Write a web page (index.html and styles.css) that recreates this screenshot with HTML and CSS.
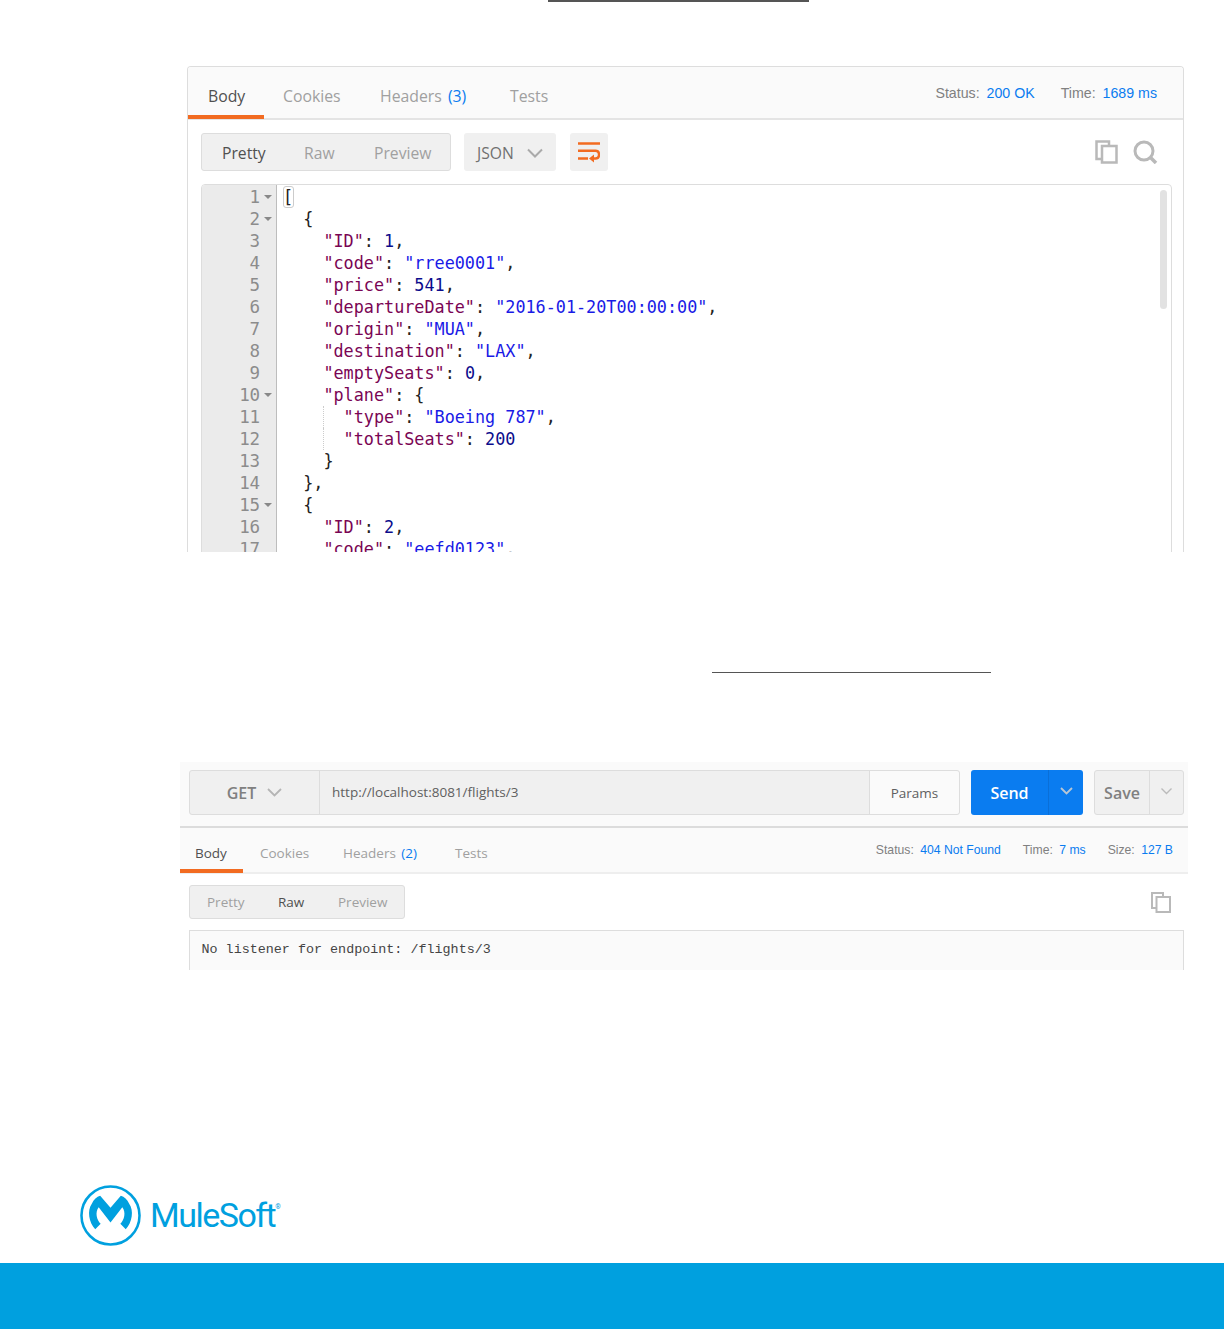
FILE: index.html
```html
<!DOCTYPE html>
<html lang="en">
<head>
<meta charset="utf-8">
<title>MuleSoft flights API</title>
<link rel="stylesheet" href="styles.css">
</head>
<body>
<div class="rule rule-top"></div>

<section class="card card-one">
  <div class="tabs tabs-lg">
    <span class="tab active">Body</span>
    <span class="tab">Cookies</span>
    <span class="tab">Headers <b>(3)</b></span>
    <span class="tab">Tests</span>
    <div class="meta">
      <span class="meta-item">Status: <b>200 OK</b></span>
      <span class="meta-item">Time: <b>1689 ms</b></span>
    </div>
  </div>
  <div class="toolbar">
    <div class="seg"><span class="on">Pretty</span><span>Raw</span><span>Preview</span></div>
    <div class="select"><span>JSON</span>
      <svg class="chev" width="16" height="10" viewBox="0 0 16 10"><path d="M1 1.500l7 7 7-7" fill="none" stroke="#aaa" stroke-width="2"/></svg>
    </div>
    <div class="wrap-btn">
      <svg width="22" height="21" viewBox="0 0 22 21"><path d="M0 1.500h22M0 16.500h10M0 8.800h17.500c2.300 0 3.500 1.600 3.500 3.800s-1.200 3.900-3.500 3.900H15" fill="none" stroke="#f26b21" stroke-width="2.400"/><path d="M16 12.500l-5 4 5 4z" fill="#f26b21"/></svg>
    </div>
    <div class="tools">
      <svg width="23" height="24" viewBox="0 0 23 24"><path d="M7 19H1.500V1.500H14V6" fill="none" stroke="#b9b9b9" stroke-width="2.500"/><rect x="7" y="6" width="14.500" height="16.500" fill="none" stroke="#b9b9b9" stroke-width="2.500"/></svg>
      <svg width="25" height="24" viewBox="0 0 25 24"><circle cx="11" cy="11" r="9" fill="none" stroke="#b9b9b9" stroke-width="3"/><path d="M17 17l6 6" stroke="#b9b9b9" stroke-width="3.500"/></svg>
    </div>
  </div>
  <div class="editor">
    <div class="gutter">
      <div class="ln">1<i></i></div><div class="ln">2<i></i></div><div class="ln">3</div><div class="ln">4</div><div class="ln">5</div><div class="ln">6</div><div class="ln">7</div><div class="ln">8</div><div class="ln">9</div><div class="ln">10<i></i></div><div class="ln">11</div><div class="ln">12</div><div class="ln">13</div><div class="ln">14</div><div class="ln">15<i></i></div><div class="ln">16</div><div class="ln">17</div>
    </div>
    <div class="code">
      <div class="line"><span class="cursor">[</span></div>
      <div class="line i1">{</div>
      <div class="line i2"><span class="k">"ID"</span>: <span class="n">1</span>,</div>
      <div class="line i2"><span class="k">"code"</span>: <span class="s">"rree0001"</span>,</div>
      <div class="line i2"><span class="k">"price"</span>: <span class="n">541</span>,</div>
      <div class="line i2"><span class="k">"departureDate"</span>: <span class="s">"2016-01-20T00:00:00"</span>,</div>
      <div class="line i2"><span class="k">"origin"</span>: <span class="s">"MUA"</span>,</div>
      <div class="line i2"><span class="k">"destination"</span>: <span class="s">"LAX"</span>,</div>
      <div class="line i2"><span class="k">"emptySeats"</span>: <span class="n">0</span>,</div>
      <div class="line i2"><span class="k">"plane"</span>: {</div>
      <div class="line i3"><span class="k">"type"</span>: <span class="s">"Boeing 787"</span>,</div>
      <div class="line i3"><span class="k">"totalSeats"</span>: <span class="n">200</span></div>
      <div class="line i2">}</div>
      <div class="line i1">},</div>
      <div class="line i1">{</div>
      <div class="line i2"><span class="k">"ID"</span>: <span class="n">2</span>,</div>
      <div class="line i2"><span class="k">"code"</span>: <span class="s">"eefd0123"</span>,</div>
    </div>
    <div class="scroll"></div>
  </div>
</section>

<div class="rule rule-mid"></div>

<section class="card-two">
  <div class="request">
    <div class="url-group">
      <div class="method"><span>GET</span>
        <svg width="15" height="9" viewBox="0 0 15 9"><path d="M1 1l6.500 6.500L14 1" fill="none" stroke="#b5b5b5" stroke-width="1.800"/></svg>
      </div>
      <div class="url">http://localhost:8081/flights/3</div>
      <div class="params">Params</div>
    </div>
    <div class="send">
      <span class="send-label">Send</span>
      <span class="send-more"><svg width="13" height="8" viewBox="0 0 13 8"><path d="M1 1l5.500 5.500L12 1" fill="none" stroke="#b8c6d4" stroke-width="1.800"/></svg></span>
    </div>
    <div class="save">
      <span class="save-label">Save</span>
      <span class="save-more"><svg width="11" height="7" viewBox="0 0 11 7"><path d="M.5.500l5 5 5-5" fill="none" stroke="#bbb" stroke-width="1.400"/></svg></span>
    </div>
  </div>
  <div class="tabs tabs-sm">
    <span class="tab active">Body</span>
    <span class="tab">Cookies</span>
    <span class="tab">Headers <b>(2)</b></span>
    <span class="tab">Tests</span>
    <div class="meta">
      <span class="meta-item">Status: <b>404 Not Found</b></span>
      <span class="meta-item">Time: <b>7 ms</b></span>
      <span class="meta-item">Size: <b>127 B</b></span>
    </div>
  </div>
  <div class="toolbar-sm">
    <div class="seg seg-sm"><span>Pretty</span><span class="on">Raw</span><span>Preview</span></div>
    <svg class="copy-sm" width="20" height="21" viewBox="0 0 20 21"><path d="M5.500 16H1V1h11v4" fill="none" stroke="#b9b9b9" stroke-width="2"/><rect x="5.500" y="5" width="13.500" height="15" fill="none" stroke="#b9b9b9" stroke-width="2"/></svg>
  </div>
  <div class="raw">No listener for endpoint: /flights/3</div>
</section>

<div class="logo">
  <svg width="61" height="61" viewBox="0 0 62 62">
    <circle cx="31" cy="31" r="29.500" fill="none" stroke="#00a0df" stroke-width="2.600"/>
    <path d="M15.500 45C9 38 7 26 12 19c2-4 5-7 8.500-8L31 23l10.500-12c3.500 1 6.500 4 8.500 8 5 7 3 19-3.500 26L41 39.500c4-4.500 6-11.500 2-17L31 38 19 22.500c-4 5.500-2 12.500 2 17z" fill="#00a0df"/>
  </svg>
  <span class="logo-word">MuleSoft<sup>®</sup></span>
</div>

<footer class="footer"></footer>
</body>
</html>
```

FILE: styles.css
```css
* { box-sizing: border-box; }
html, body { margin: 0; padding: 0; }
body {
  width: 1224px;
  height: 1329px;
  overflow: hidden;
  background: #fff;
  font-family: "Open Sans", sans-serif;
  display: flex;
  flex-direction: column;
}
.rule { background: #555; }
.rule-top { width: 261px; height: 2px; margin-left: 548px; }
.rule-mid { width: 279px; height: 1px; margin: 120px 0 0 712px; }

b { font-weight: 400; color: #0a7cf0; }
.tab b { margin-left: 2px; }
.meta b { margin-left: 3px; }

/* Tabs */
.tabs { display: flex; background: #fafafa; }
.tab { color: #a0a0a0; white-space: nowrap; }
.tab.active { color: #505050; }
.meta { margin-left: auto; display: flex; font-family: "Liberation Sans", sans-serif; color: #808080; }

.tabs-lg { height: 53px; border-bottom: 2px solid #e4e4e4; font-size: 15.800px; }
.tabs-lg .tab { padding-top: 18px; height: 51px; line-height: 22px; }
.tabs-lg .tab.active { width: 76px; padding-left: 20px; border-bottom: 4px solid #f26b21; height: 52px; }
.tabs-lg .tab:nth-child(2) { margin-left: 19px; width: 97px; }
.tabs-lg .tab:nth-child(3) { width: 130px; }
.tabs-lg .meta { font-size: 14.200px; padding: 17px 26px 0 0; gap: 26px; line-height: 18px; }

.tabs-sm { height: 46px; border-bottom: 2px solid #eee; font-size: 13.500px; }
.tabs-sm .tab { padding-top: 15px; line-height: 20px; height: 44px; }
.tabs-sm .tab.active { width: 63px; padding-left: 15px; border-bottom: 4px solid #f26b21; height: 45px; }
.tabs-sm .tab:nth-child(2) { margin-left: 17px; width: 83px; }
.tabs-sm .tab:nth-child(3) { width: 112px; }
.tabs-sm .meta { font-size: 12.200px; padding: 14px 15px 0 0; gap: 22px; line-height: 17px; }

/* Segment control */
.seg { display: flex; background: #f0f0f0; border: 1px solid #ddd; border-radius: 3px; color: #a0a0a0; white-space: nowrap; }
.seg .on { color: #505050; }

/* First card */
.card-one {
  margin: 64px 0 0 187px;
  width: 997px;
  height: 486px;
  border: 1px solid #ddd;
  border-bottom: 0;
  border-radius: 4px 4px 0 0;
  overflow: hidden;
  flex: none;
}
.toolbar { display: flex; align-items: center; height: 38px; margin: 13px 11px 13px 13px; }
.toolbar .seg { width: 250px; height: 38px; align-items: center; font-size: 15.700px; padding: 1px 0 0 20px; }
.toolbar .seg span:nth-child(1) { width: 82px; }
.toolbar .seg span:nth-child(2) { width: 70px; }
.select {
  margin-left: 13px; width: 92px; height: 38px; background: #f0f0f0; border-radius: 3px;
  font-size: 15.700px; color: #707070; display: flex; align-items: center; padding: 1px 0 0 13px; gap: 13px;
}
.wrap-btn {
  margin-left: 14px; width: 38px; height: 38px; background: #f0f0f0; border-radius: 3px;
  display: flex; align-items: center; justify-content: center; padding-top: 1px;
}
.tools { margin-left: auto; margin-right: 14px; margin-top: -1px; display: flex; gap: 15px; align-items: center; }

.editor {
  position: relative;
  margin: 0 11px 0 13px;
  height: 400px;
  display: flex;
  border: 1px solid #ddd;
  border-radius: 4px;
  overflow: hidden;
  font: 16.800px/22px "DejaVu Sans Mono", monospace;
}
.gutter { width: 75px; flex: none; padding-top: 1px; background: #ebebeb; border-right: 1px solid #bdbdbd; color: #8c8c8c; font-size: 17.500px; letter-spacing: -0.450px; }
.ln { height: 22px; text-align: right; padding-right: 16.500px; position: relative; }
.ln i {
  position: absolute; right: 4px; top: 9px; width: 0; height: 0;
  border-left: 4px solid transparent; border-right: 4px solid transparent; border-top: 4px solid #888;
}
.code { padding: 1px 0 0 6px; color: #222; flex: 1; white-space: nowrap; }
.line { height: 22px; }
.i1 { padding-left: 2ch; }
.i2 { padding-left: 4ch; }
.i3 { margin-left: 4ch; padding-left: 2ch; border-left: 1px dotted #ccc; text-indent: -1px; }
.cursor { display: inline-block; width: 11px; height: 22px; border: 1px solid #ccc; border-radius: 3px; line-height: 20px; text-indent: -1px; }
.k { color: #7a0554; }
.s { color: #1a1ae6; }
.n { color: #0c0c8c; }
.scroll { position: absolute; right: 4px; top: 5px; width: 7px; height: 119px; border-radius: 4px; background: #e2e2e2; }

/* Second card */
.card-two {
  margin: 89px 0 0 180px;
  width: 1008px;
  height: 208px;
  background: #fff;
  overflow: hidden;
  flex: none;
}
.request {
  display: flex;
  height: 66px;
  padding: 8px 4px 0 9px;
  border-bottom: 2px solid #dcdcdc;
  background: #fafafa;
}
.url-group { display: flex; width: 771px; height: 45px; border: 1px solid #ddd; border-radius: 3px; background: #f0f0f0; }
.method {
  width: 130px; border-right: 1px solid #ddd; display: flex; align-items: center; justify-content: center; gap: 11px;
  font-size: 16px; font-weight: 600; color: #808080;
}
.url { flex: 1; padding: 11px 0 0 12px; font-size: 13.500px; line-height: 20px; color: #606060; }
.params {
  width: 90px; background: #fafafa; border-left: 1px solid #ddd; color: #606060; font-size: 13.500px;
  display: flex; align-items: center; justify-content: center; border-radius: 0 3px 3px 0;
}
.send {
  margin-left: 11px; width: 112px; height: 45px; background: #0a7cf0; border-radius: 3px; display: flex; color: #fff;
  font-size: 16px; font-weight: 600;
}
.send-label { width: 78px; display: flex; align-items: center; justify-content: center; border-right: 1px solid #0a6fd8; }
.send-more { flex: 1; display: flex; align-items: center; justify-content: center; padding-bottom: 3px; }
.save {
  margin-left: 11px; width: 90px; height: 45px; background: #f0f0f0; border: 1px solid #ddd; border-radius: 3px;
  display: flex; color: #808080; font-size: 16px; font-weight: 600;
}
.save-label { width: 55px; display: flex; align-items: center; justify-content: center; border-right: 1px solid #ddd; }
.save-more { flex: 1; display: flex; align-items: center; justify-content: center; padding-bottom: 3px; }

.toolbar-sm { display: flex; height: 34px; margin: 11px 17px 11px 9px; align-items: center; justify-content: space-between; }
.seg-sm { width: 216px; height: 34px; align-items: center; font-size: 13.500px; padding-left: 17px; }
.seg-sm span:nth-child(1) { width: 71px; }
.seg-sm span:nth-child(2) { width: 60px; }
.raw {
  margin: 0 4px 0 9px;
  height: 40px;
  border: 1px solid #ddd;
  border-bottom: 0;
  background: #fafafa;
  padding: 10px 0 0 11.500px;
  font: 13.400px/17px "Liberation Mono", monospace;
  color: #444;
}

/* Logo and footer */
.logo { margin: 215px 0 0 80px; height: 61px; display: flex; align-items: center; gap: 9px; flex: none; }
.logo-word { font: 400 34px/61px "Roboto", sans-serif; letter-spacing: -1.500px; color: #00a0df; white-space: nowrap; }
.logo-word sup { font-size: 7px; vertical-align: 18px; line-height: 0; letter-spacing: 0; }
.footer { margin-top: auto; height: 66px; background: #00a0df; flex: none; }
```
